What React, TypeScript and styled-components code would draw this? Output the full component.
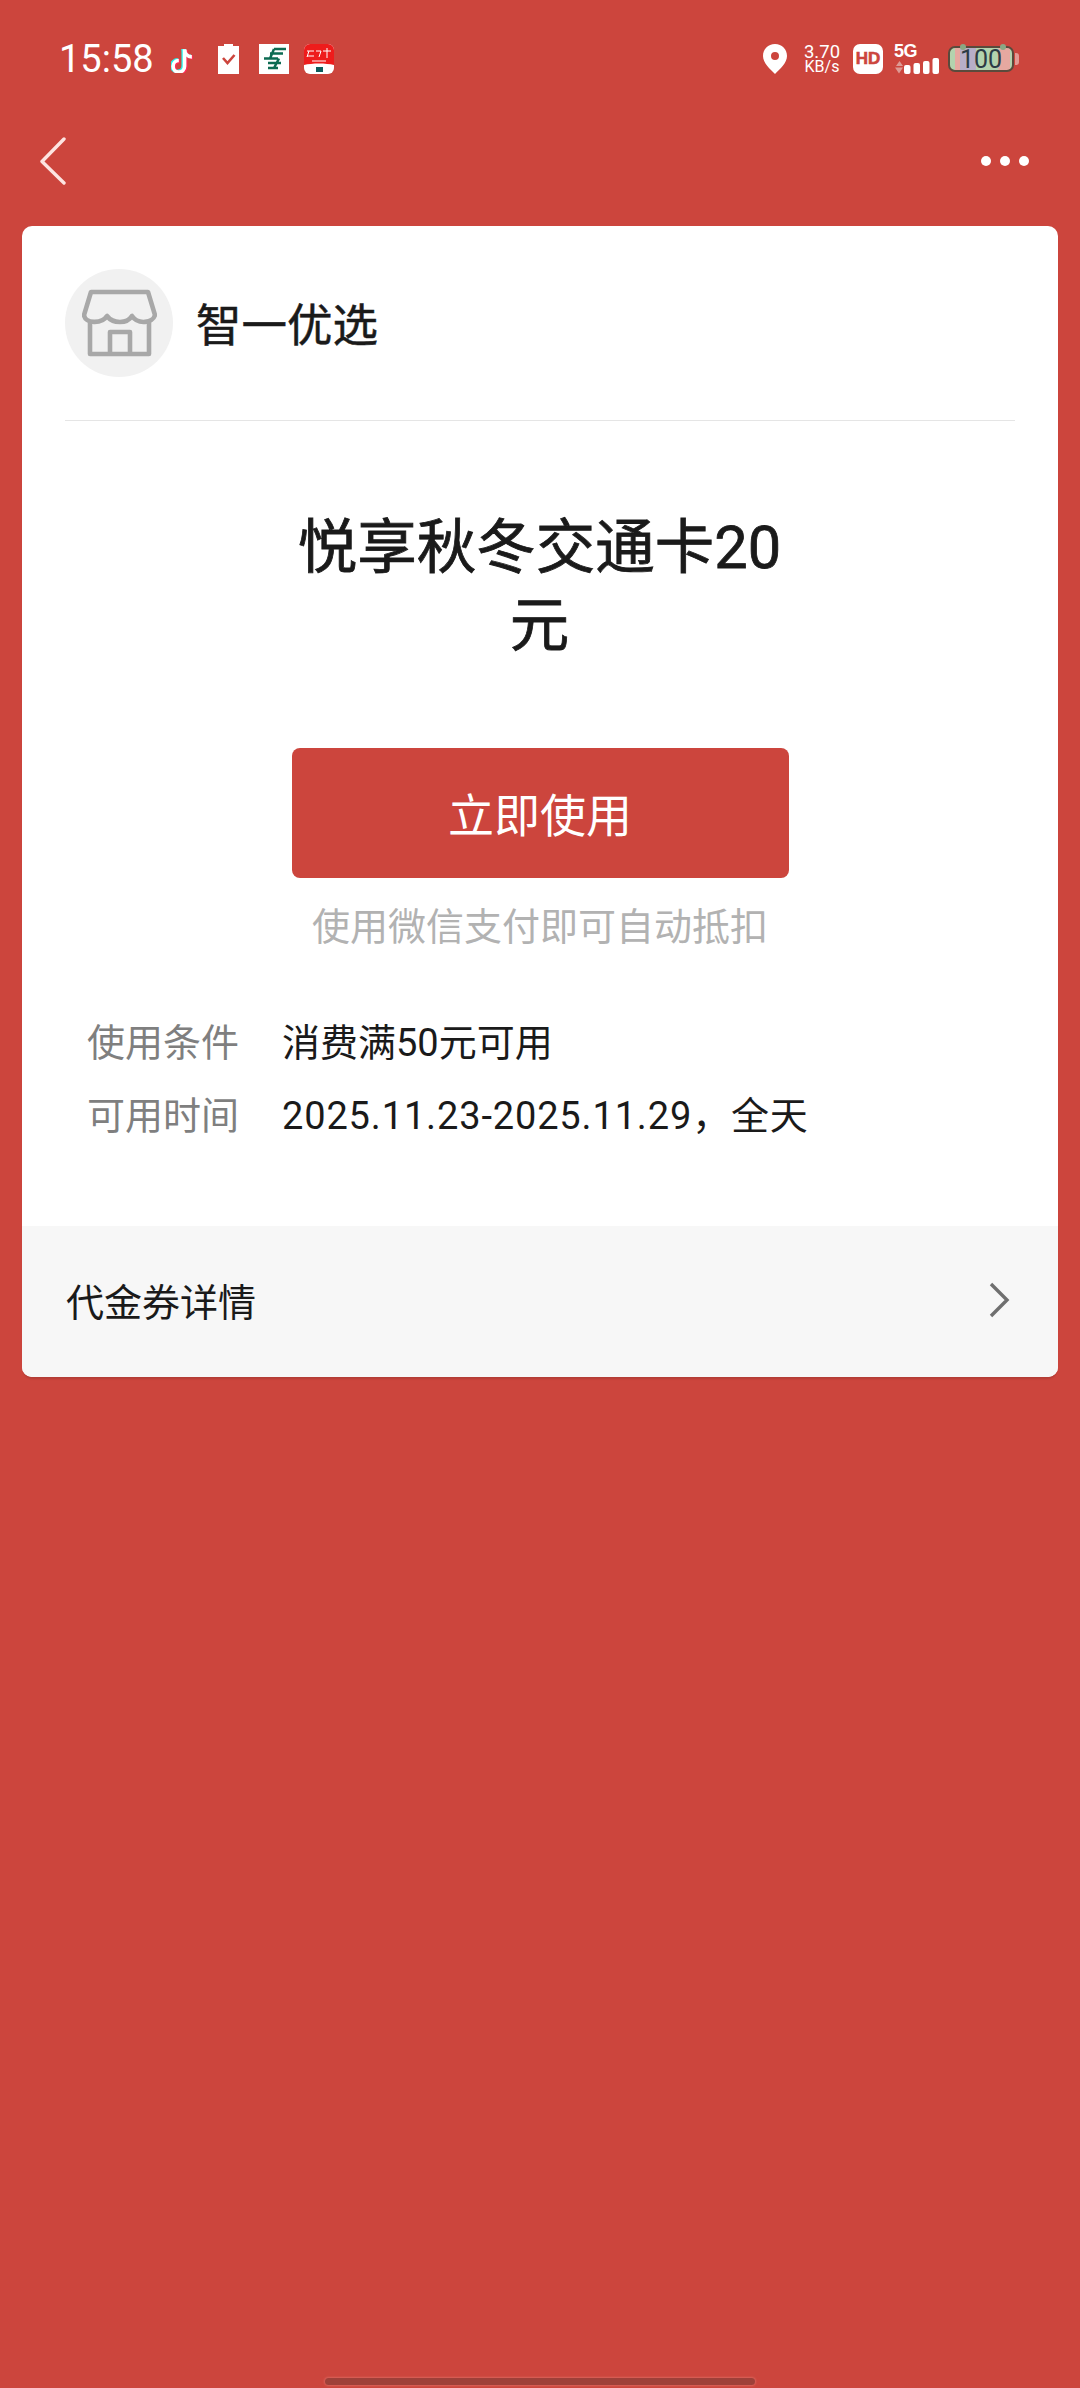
import React from "react";
import styled, { createGlobalStyle } from "styled-components";

const CJK = `"Noto Sans CJK SC", sans-serif`;
const LATIN = `Roboto, "Noto Sans CJK SC", sans-serif`;

const GlobalStyle = createGlobalStyle`
  html, body {
    margin: 0;
    padding: 0;
    background: #cc453d;
  }
  * {
    box-sizing: border-box;
  }
`;

const App = () => {
  return (
    <Page>
      <GlobalStyle />
      <StatusBar>
        <StatusGroup>
          <Clock>15:58</Clock>
          <TikTokIcon />
          <ClipboardIcon />
          <PostIcon />
          <BankIcon />
        </StatusGroup>
        <StatusGroup>
          <PinIcon />
          <Speed>
            <span className="num">3.70</span>
            <span className="unit">KB/s</span>
          </Speed>
          <HdBadge>HD</HdBadge>
          <Signal>
            <span className="label">5G</span>
            <SignalBars />
          </Signal>
          <Battery>
            <BatteryEar $left={10} />
            <BatteryEar $left={50} />
            100
          </Battery>
        </StatusGroup>
      </StatusBar>
      <NavRow>
        <svg width="28" height="48" viewBox="0 0 28 48" fill="none">
          <path d="M25 2 3 24.5 25 46" stroke="#fde4e1" strokeWidth="3.4" strokeLinecap="round" strokeLinejoin="round" />
        </svg>
        <MoreDots>
          <i />
          <i />
          <i />
        </MoreDots>
      </NavRow>
      <Card>
        <ShopRow>
          <Avatar>
            <StoreIcon />
          </Avatar>
          <ShopName>智一优选</ShopName>
        </ShopRow>
        <Main>
          <Title>悦享秋冬交通卡20元</Title>
          <UseButton>立即使用</UseButton>
          <Hint>使用微信支付即可自动抵扣</Hint>
        </Main>
        <InfoList>
          <InfoRow>
            <InfoLabel>使用条件</InfoLabel>
            <InfoValue>消费满50元可用</InfoValue>
          </InfoRow>
          <InfoRow>
            <InfoLabel>可用时间</InfoLabel>
            <InfoValue $spaced>2025.11.23-2025.11.29，全天</InfoValue>
          </InfoRow>
        </InfoList>
        <DetailRow>
          <span>代金券详情</span>
          <svg width="22" height="36" viewBox="0 0 22 36" fill="none">
            <path d="M3 2 19 18 3 34" stroke="#6f6f6f" strokeWidth="3.4" />
          </svg>
        </DetailRow>
      </Card>
      <HomeBar />
    </Page>
  );
};

export default App;

const TikTokIcon = () => (
  <svg width="24" height="27" viewBox="1 0 23 25" fill="none" style={{ marginLeft: 17 }}>
    <path d="M14 3v16a5.500 5.500 0 1 1-5.500-5.500" stroke="#25f4ee" strokeWidth="4" transform="translate(-1 -.5)" />
    <path d="M14 3c0 4 3 7 7 7" stroke="#25f4ee" strokeWidth="4" transform="translate(-1 -.5)" />
    <path d="M14 3v16a5.500 5.500 0 1 1-5.500-5.500" stroke="#fe2c55" strokeWidth="4" transform="translate(1 .5)" />
    <path d="M14 3c0 4 3 7 7 7" stroke="#fe2c55" strokeWidth="4" transform="translate(1 .5)" />
    <path d="M14 3v16a5.500 5.500 0 1 1-5.500-5.500" stroke="#fff" strokeWidth="3.500" />
    <path d="M14 3c0 4 3 7 7 7" stroke="#fff" strokeWidth="3.500" />
  </svg>
);

const ClipboardIcon = () => (
  <svg width="21" height="30" viewBox="0 0 21 30" style={{ marginLeft: 23 }}>
    <path d="M0 2h6V0h9v2h6v28H0z" fill="#fff" />
    <path d="M5 14l4.500 5L16.500 11" fill="none" stroke="#cc453d" strokeWidth="2.600" />
  </svg>
);

const PostIcon = () => (
  <svg width="30" height="30" viewBox="0 0 30 30" style={{ marginLeft: 20 }}>
    <rect width="30" height="30" fill="#fff" />
    <path d="M15 5h12M11 9.500h13M5 14.500h14M9 19h13M9 24h10M15 5 11 14.500M20 14.500 15 24" fill="none" stroke="#0d6b52" strokeWidth="2.500" />
  </svg>
);

const BankIcon = () => (
  <svg width="30" height="30" viewBox="0 0 30 30" style={{ marginLeft: 15 }}>
    <rect width="30" height="30" rx="6" fill="#fff" />
    <path d="M0 6a6 6 0 0 1 6-6h18a6 6 0 0 1 6 6v15c-8-2-22-2-30 0z" fill="#ee1c1c" />
    <path d="M3 7h7M3 12h7M5 7l-2 6M12 7h5l-2 6M19 7h8M23 4v10M8 17h14" fill="none" stroke="#fff" strokeWidth="1" />
    <rect x="12" y="23" width="7" height="5" fill="#0d5d5d" />
  </svg>
);

const PinIcon = () => (
  <svg width="24" height="30" viewBox="0 0 24 30" style={{ marginRight: 16 }}>
    <path
      fillRule="evenodd"
      d="M12 0C5 0 0 5 0 12c0 7 7 13 12 18 5-5 12-11 12-18C24 5 19 0 12 0zm0 8a4 4 0 1 1 0 8 4 4 0 0 1 0-8z"
      fill="#fff"
    />
  </svg>
);

const SignalBars = () => (
  <svg width="45" height="16" viewBox="0 0 45 16">
    <rect x="10" y="7" width="6.500" height="9" rx="2" fill="#fff" />
    <rect x="19.500" y="5" width="6.500" height="11" rx="2" fill="#fff" />
    <rect x="29" y="3" width="6.500" height="13" rx="2" fill="#fff" />
    <rect x="38.500" y="0" width="6.500" height="16" rx="2" fill="#fff" />
    <path d="M2 8h7L5.500 3zM1 9.500h8L5 15.500z" fill="#dd9a94" />
  </svg>
);

const StoreIcon = () => (
  <svg width="75" height="68" viewBox="0 0 75 68" fill="none" stroke="#a8a8a8" strokeWidth="4.600" strokeLinejoin="round">
    <path d="M9 3h57l7 23c-2 8-17 10-23 1-5 8-19 8-25 0-5 8-22 8-23-1z" />
    <path d="M8 32v33h59V32" />
    <path d="M28 65V43h20v22" />
  </svg>
);

const Page = styled.div`
  width: 1080px;
  height: 2388px;
  position: relative;
  overflow: hidden;
  background: #cc453d;
  font-family: ${CJK};
`;

const StatusBar = styled.div`
  height: 118px;
  padding: 44px 61px 0 59px;
  display: flex;
  justify-content: space-between;
  align-items: flex-start;
`;

const StatusGroup = styled.div`
  display: flex;
  align-items: center;
  height: 30px;
`;

const Clock = styled.div`
  font-family: ${LATIN};
  font-size: 38px;
  line-height: 30px;
  color: #fff;
`;

const Speed = styled.div`
  width: 38px;
  display: flex;
  flex-direction: column;
  align-items: center;
  font-family: ${LATIN};
  color: #fff;
  margin-right: 12px;
  .num {
    font-size: 18.5px;
    line-height: 16px;
  }
  .unit {
    font-size: 16px;
    line-height: 14px;
  }
`;

const HdBadge = styled.div`
  width: 30px;
  height: 30px;
  border-radius: 7px;
  background: #fff;
  color: #cc453d;
  font-family: "Liberation Sans", sans-serif;
  font-weight: 700;
  font-size: 17px;
  line-height: 30px;
  text-align: center;
  -webkit-text-stroke: 0.6px #cc453d;
  margin-right: 11px;
`;

const Signal = styled.div`
  width: 45px;
  height: 30px;
  display: flex;
  flex-direction: column;
  color: #fff;
  margin-right: 9px;
  .label {
    font-family: "Liberation Sans", sans-serif;
    font-weight: 700;
    font-size: 18px;
    line-height: 14px;
    letter-spacing: -0.5px;
  }
`;

const Battery = styled.div`
  width: 66px;
  height: 26px;
  border: 2px solid #5a4a3c;
  border-radius: 7px;
  background: linear-gradient(
    90deg,
    #b3d3ae 0 8%,
    #e6a8a0 8% 16%,
    #b7aec8 16% 42%,
    #b3d3ae 42% 76%,
    #e6a8a0 80% 96%,
    #b3d3ae 96%
  );
  color: #2c3a45;
  font-family: ${LATIN};
  font-size: 25px;
  line-height: 23px;
  text-align: center;
  position: relative;
  margin-right: 5px;
  &::after {
    content: "";
    position: absolute;
    right: -7px;
    top: 5px;
    width: 4px;
    height: 12px;
    border-radius: 0 3px 3px 0;
    background: #e39a94;
  }
`;

const BatteryEar = styled.span<{ $left: number }>`
  position: absolute;
  top: -4px;
  left: ${(p) => p.$left}px;
  width: 6px;
  height: 6px;
  border-radius: 50%;
  background: #8aa884;
`;

const NavRow = styled.div`
  height: 108px;
  padding: 19px 51px 0 39px;
  display: flex;
  justify-content: space-between;
  align-items: flex-start;
`;

const MoreDots = styled.div`
  display: flex;
  gap: 9px;
  margin-top: 19px;
  i {
    display: block;
    width: 10px;
    height: 10px;
    border-radius: 50%;
    background: #fff;
  }
`;

const Card = styled.div`
  margin: 0 22px;
  height: 1151px;
  background: #fff;
  border-radius: 10px;
  box-shadow: 0 3px 2px -1px rgba(0, 0, 0, 0.12);
  display: flex;
  flex-direction: column;
`;

const ShopRow = styled.div`
  margin: 0 43px;
  height: 195px;
  padding-top: 43px;
  border-bottom: 1px solid #e5e5e5;
  display: flex;
  align-items: flex-start;
  gap: 23px;
`;

const Avatar = styled.div`
  width: 108px;
  height: 108px;
  border-radius: 50%;
  background: #f1f1f1;
  display: flex;
  align-items: center;
  justify-content: center;
`;

const ShopName = styled.div`
  font-size: 45.5px;
  line-height: 106px;
  -webkit-text-stroke: 0.5px #1a1a1a;
  color: #1a1a1a;
`;

const Main = styled.div`
  display: flex;
  flex-direction: column;
  align-items: center;
`;

const Title = styled.div`
  width: 500px;
  margin-top: 88px;
  padding-right: 1px;
  font-family: ${LATIN};
  font-size: 59.5px;
  line-height: 78px;
  font-weight: 400;
  -webkit-text-stroke: 0.8px #1a1a1a;
  text-align: center;
  color: #1a1a1a;
`;

const UseButton = styled.div`
  width: 497px;
  height: 130px;
  margin-top: 83px;
  border-radius: 8px;
  background: #cc453d;
  color: #fff;
  font-size: 46px;
  line-height: 128px;
  text-align: center;
`;

const Hint = styled.div`
  margin-top: 19px;
  font-size: 38px;
  line-height: 54px;
  color: #b2b2b2;
`;

const InfoList = styled.div`
  margin-top: 62px;
  padding: 0 65px;
  display: flex;
  flex-direction: column;
  gap: 19px;
`;

const InfoRow = styled.div`
  display: flex;
  align-items: baseline;
  height: 54px;
  font-size: 38px;
  line-height: 54px;
`;

const InfoLabel = styled.div`
  width: 195px;
  color: #7f7f7f;
`;

const InfoValue = styled.div<{ $spaced?: boolean }>`
  color: #1a1a1a;
  font-family: ${LATIN};
  letter-spacing: ${(p) => (p.$spaced ? "0.85px" : "0")};
`;

const DetailRow = styled.div`
  margin-top: auto;
  height: 151px;
  padding: 0 48px 4px 44px;
  background: #f7f7f7;
  border-radius: 0 0 10px 10px;
  display: flex;
  align-items: center;
  justify-content: space-between;
  font-size: 38px;
  color: #1a1a1a;
`;

const HomeBar = styled.div`
  position: absolute;
  left: 325px;
  top: 2378px;
  width: 430px;
  height: 7px;
  border-radius: 4px;
  background: #9e4039;
  box-shadow: 0 0 2px 1px #d9635a;
`;
